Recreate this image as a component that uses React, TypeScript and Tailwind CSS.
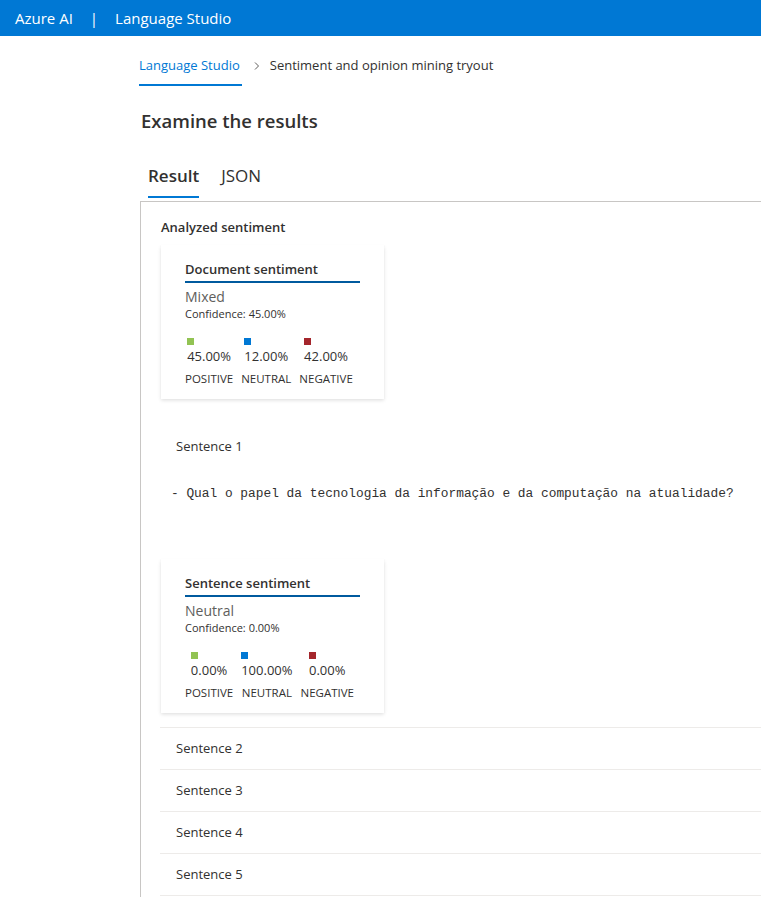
import React from 'react'

type Score = { pos: string; neu: string; neg: string }

function SentimentCard({ title, label, confidence, scores }: { title: string; label: string; confidence: string; scores: Score }) {
  const cols = [
    { value: scores.pos, name: 'POSITIVE', color: 'bg-[#92c353]' },
    { value: scores.neu, name: 'NEUTRAL', color: 'bg-[#0078d4]' },
    { value: scores.neg, name: 'NEGATIVE', color: 'bg-[#a4262c]' },
  ]
  return (
    <div className="w-[223px] bg-white px-6 pt-[15px] pb-[13px] shadow-[0_1.6px_3.6px_rgba(0,0,0,0.13),0_0.3px_0.9px_rgba(0,0,0,0.11)]">
      <div className="w-[175px] border-b-2 border-[#005a9e] pb-[1px] text-[13px] font-semibold text-[#323130]">{title}</div>
      <div className="mt-[5px] text-[14px] leading-[18px] text-[#605e5c]">{label}</div>
      <div className="text-[11px] leading-[16px] text-[#323130]">Confidence: {confidence}</div>
      <div className="mt-[16px] flex gap-[8px]">
        {cols.map((c) => (
          <div key={c.name} className="flex flex-col items-center">
            <div className="flex flex-col items-start">
              <div className={`h-[7px] w-[7px] ${c.color}`} />
              <div className="mt-[2px] text-[13px] leading-[18px] text-[#323130]">{c.value}</div>
            </div>
            <div className="mt-[7px] text-[11.5px] leading-[14px] text-[#323130]">{c.name}</div>
          </div>
        ))}
      </div>
    </div>
  )
}

export default function App() {
  const rows = ['Sentence 2', 'Sentence 3', 'Sentence 4', 'Sentence 5']
  return (
    <div className="min-h-[897px] bg-white font-['Segoe_UI','Open_Sans',sans-serif] text-[#323130]">
      <header className="flex h-9 items-center bg-[#0078d4] pl-[15px] text-[15px] text-white">
        <span>Azure AI</span>
        <span className="mx-[17px]">|</span>
        <span>Language Studio</span>
      </header>

      <div className="pl-[139px]">
        <nav className="flex items-center pt-[20px] text-[13px]">
          <span className="border-b-2 border-[#0078d4] pb-[8px] pr-[2px] text-[#0078d4]">Language Studio</span>
          <span className="mb-[10px] ml-[10px] mr-[8px] text-[#605e5c]">
            <svg width="10" height="10" viewBox="0 0 10 10" fill="none" stroke="currentColor" strokeWidth="1">
              <path d="M3 1.5 6.5 5 3 8.5" />
            </svg>
          </span>
          <span className="mb-[10px] text-[#323130]">Sentiment and opinion mining tryout</span>
        </nav>

        <h1 className="mt-[21px] pl-[2px] text-[18.5px] leading-[28px] font-semibold">Examine the results</h1>

        <div className="mt-[29px] flex gap-[22px] pl-[9px] text-[17px] leading-[24px]">
          <div className="border-b-2 border-[#0078d4] pb-[8px] font-semibold">Result</div>
          <div className="pb-[8px] text-[#323130]">JSON</div>
        </div>

        <section className="ml-px mt-[3px] border-l border-t border-[#c8c6c4] pb-4 pl-5">
          <div className="pt-[16px] text-[13px] font-semibold">Analyzed sentiment</div>
          <div className="mt-[8px]">
            <SentimentCard title="Document sentiment" label="Mixed" confidence="45.00%" scores={{ pos: '45.00%', neu: '12.00%', neg: '42.00%' }} />
          </div>

          <div className="mt-[38px] pl-[15px] text-[13px]">Sentence 1</div>
          <div className="mt-[28px] whitespace-pre pl-[10px] font-['Liberation_Mono',monospace] text-[12.85px]">- Qual o papel da tecnologia da informação e da computação na atualidade?</div>

          <div className="mt-[56px]">
            <SentimentCard title="Sentence sentiment" label="Neutral" confidence="0.00%" scores={{ pos: '0.00%', neu: '100.00%', neg: '0.00%' }} />
          </div>

          <div className="mt-[14px] -ml-px border-t border-[#edebe9]">
            {rows.map((r) => (
              <div key={r} className="flex h-[42px] items-center border-b border-[#edebe9] pb-[2px] pl-[16px] pt-[2px] text-[13px]">
                {r}
              </div>
            ))}
          </div>
        </section>
      </div>
    </div>
  )
}
